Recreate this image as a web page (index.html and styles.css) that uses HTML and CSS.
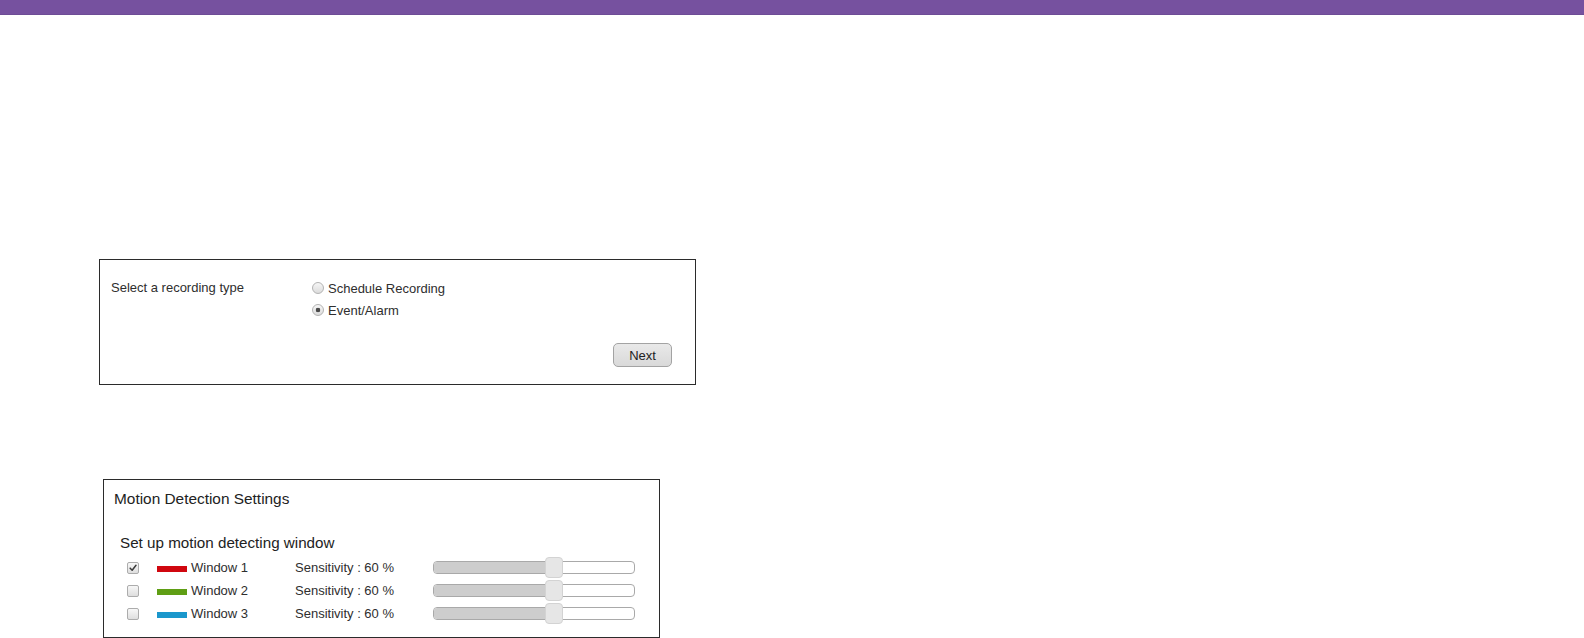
FILE: index.html
```html
<!DOCTYPE html>
<html lang="en">
<head>
<meta charset="utf-8">
<title>Recording Setup</title>
<link rel="stylesheet" href="styles.css">
</head>
<body>
<div class="topbar"></div>
<main class="page">
  <section class="panel rec">
    <div class="rec-grid">
      <div class="rec-label">Select a recording type</div>
      <div class="options">
        <label class="opt"><span class="radio"></span>Schedule Recording</label>
        <label class="opt"><span class="radio on"></span>Event/Alarm</label>
      </div>
    </div>
    <div class="actions"><button class="btn" type="button">Next</button></div>
  </section>

  <section class="panel motion">
    <h2 class="m-title">Motion Detection Settings</h2>
    <h3 class="m-sub">Set up motion detecting window</h3>
    <div class="rows">
      <div class="row">
        <span class="check on"><svg viewBox="0 0 12 12" width="12" height="12"><path d="M2.6 6.2 L5 8.6 L9.6 2.8" fill="none" stroke="#3a3a3a" stroke-width="1.8" stroke-linecap="round" stroke-linejoin="round"/></svg></span>
        <span class="swatch red"></span>
        <span class="wname">Window 1</span>
        <span class="sens">Sensitivity : 60 %</span>
        <span class="slider"><span class="fill" style="width:60%"></span><span class="thumb" style="left:60%"></span></span>
      </div>
      <div class="row">
        <span class="check"></span>
        <span class="swatch green"></span>
        <span class="wname">Window 2</span>
        <span class="sens">Sensitivity : 60 %</span>
        <span class="slider"><span class="fill" style="width:60%"></span><span class="thumb" style="left:60%"></span></span>
      </div>
      <div class="row">
        <span class="check"></span>
        <span class="swatch blue"></span>
        <span class="wname">Window 3</span>
        <span class="sens">Sensitivity : 60 %</span>
        <span class="slider"><span class="fill" style="width:60%"></span><span class="thumb" style="left:60%"></span></span>
      </div>
    </div>
  </section>
</main>
</body>
</html>
```

FILE: styles.css
```css
* { box-sizing: border-box; }
html, body {
  margin: 0;
  padding: 0;
  background: #fff;
  font-family: "Liberation Sans", Arial, sans-serif;
  color: #333;
}
body { height: 638px; overflow: hidden; }

.topbar {
  height: 15px;
  background: #76519f;
  border-bottom: 1px solid #6d4c95;
}

.page {
  padding-left: 99px;
}

.panel {
  border: 1px solid #2b2b2b;
  background: #fff;
}

/* Recording type panel */
.rec {
  width: 597px;
  margin-top: 244px;
  padding: 17px 22px 17px 11px;
  font-size: 13px;
}
.rec-grid {
  display: grid;
  grid-template-columns: 201px 1fr;
}
.rec-label {
  line-height: 22px;
  color: #2e2e2e;
}
.options {
  display: flex;
  flex-direction: column;
}
.opt {
  display: flex;
  align-items: center;
  height: 22px;
  color: #2e2e2e;
}
.radio {
  width: 12px;
  height: 12px;
  border-radius: 50%;
  border: 1px solid #b3b3b3;
  background: linear-gradient(#f6f6f6, #dcdcdc);
  margin-right: 4px;
  flex: none;
}
.radio.on {
  background: radial-gradient(circle at 50% 50%, #4a4a4a 0, #4a4a4a 2px, rgba(74,74,74,0) 2.6px), linear-gradient(#f6f6f6, #dcdcdc);
}
.actions {
  display: flex;
  justify-content: flex-end;
  margin-top: 22px;
  padding-right: 1px;
}
.btn {
  width: 59px;
  height: 24px;
  border: 1px solid #a3a3a3;
  border-radius: 5px;
  background: linear-gradient(#e9e9e9, #d9d9d9);
  font-family: "Liberation Sans", Arial, sans-serif;
  font-size: 13px;
  color: #222;
  padding: 0;
}

/* Motion panel */
.motion {
  width: 557px;
  margin-top: 94px;
  margin-left: 4px;
  padding: 10px 10px 12px 10px;
}
.m-title {
  margin: 0;
  font-weight: normal;
  font-size: 15.4px;
  line-height: 18px;
  color: #222;
}
.m-sub {
  margin: 26px 0 0 6px;
  font-weight: normal;
  font-size: 15.2px;
  line-height: 18px;
  color: #222;
}
.rows {
  margin-top: 4px;
  display: flex;
  flex-direction: column;
}
.row {
  display: flex;
  align-items: center;
  height: 23px;
  font-size: 13px;
  color: #2e2e2e;
}
.check {
  width: 12px;
  height: 12px;
  margin-left: 13px;
  border: 1px solid #acacac;
  border-radius: 2px;
  background: linear-gradient(#f7f7f7, #dedede);
  display: flex;
  align-items: center;
  justify-content: center;
  flex: none;
}
.check svg { display: block; }
.swatch {
  width: 30px;
  height: 6px;
  margin-left: 18px;
  margin-top: 3px;
  flex: none;
}
.swatch.red { background: #d0070f; }
.swatch.green { background: #5f9e14; }
.swatch.blue { background: #1a97cc; }
.wname {
  width: 104px;
  margin-left: 4px;
  flex: none;
}
.sens {
  width: 138px;
  flex: none;
}
.slider {
  position: relative;
  width: 202px;
  height: 13px;
  border: 1px solid #a9a9a9;
  border-radius: 4px;
  background: #fff;
  flex: none;
}
.fill {
  position: absolute;
  left: 0;
  top: 0;
  bottom: 0;
  background: #cdcdcd;
  border-radius: 3px 0 0 3px;
}
.thumb {
  position: absolute;
  top: -5px;
  width: 18px;
  height: 21px;
  margin-left: -9px;
  background: #e6e6e6;
  border: 1px solid #d3d3d3;
  border-radius: 4px;
}
```
